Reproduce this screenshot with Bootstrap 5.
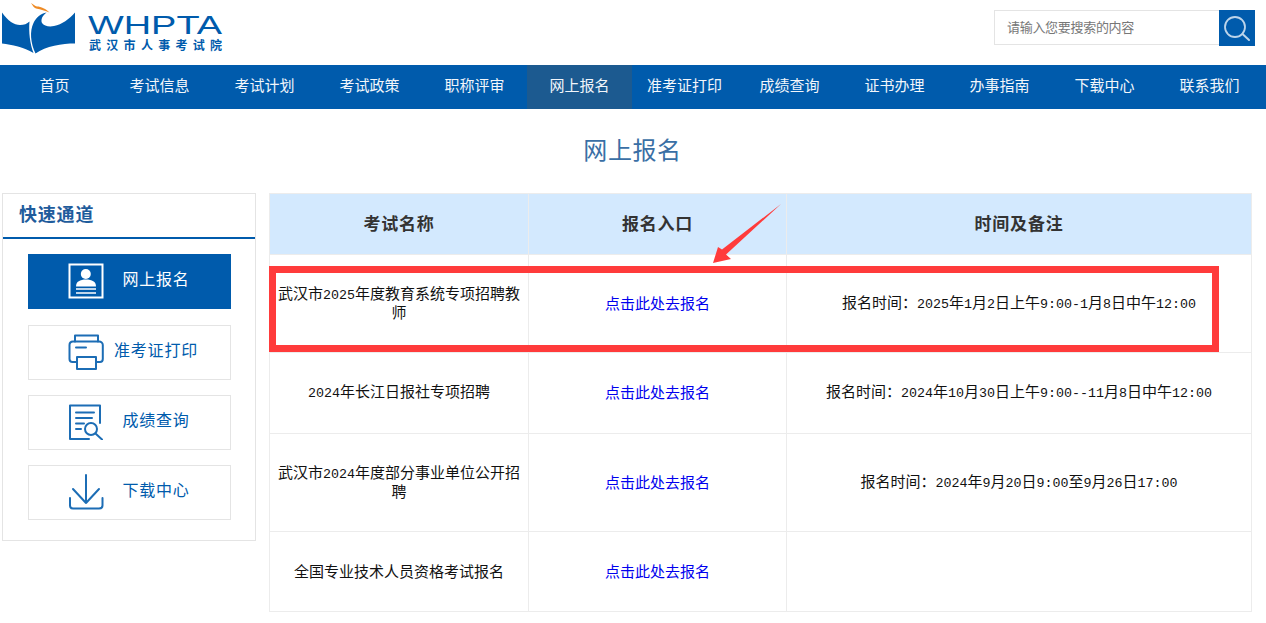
<!DOCTYPE html>
<html lang="zh-CN">
<head>
<meta charset="utf-8">
<title>网上报名</title>
<link href="https://cdn.jsdelivr.net/npm/bootstrap@5.3.0/dist/css/bootstrap.min.css" rel="stylesheet">
<style>
:root{--wh-blue:#005bac;--wh-line:#e4e4e4;}
html,body{height:623px;overflow:hidden;}
body{font-family:"Noto Sans CJK SC","Liberation Sans",sans-serif;font-size:15px;color:#111;background:#fff;}
.site-wrap{width:1260px;margin-left:2px;}
.site-head{height:65px;}
.logo-svg{width:224px;height:56px;display:block;}
.logo-cn{font-size:12px;font-weight:700;fill:#005bac;letter-spacing:5.300px;}
.logo-en{font-family:"Liberation Sans",sans-serif;font-size:25px;fill:#005bac;}
.search-box{margin-top:10px;margin-right:7px;height:36px;}
.search-input{width:225px;height:35px;border:1px solid var(--wh-line);border-right:0;border-radius:0;padding:0 12px 3px;font-size:13px;letter-spacing:-.3px;background:#fff;outline:0;}
.search-input::placeholder{color:#777;opacity:1;}
.search-btn{width:36px;height:36px;background:var(--wh-blue);border:0;padding:0;display:block;}
.main-nav{height:44px;background:var(--wh-blue);}
.main-nav-in{width:1260px;margin-left:2px;}
.nav-entry{width:105px;height:44px;line-height:40px;text-align:center;color:#f2f6fb;font-size:15px;text-decoration:none;display:block;}
.nav-entry.is-on{background:#1c5a90;}
.page-title{font-size:24px;line-height:34px;color:#3a6fa5;text-align:center;margin:23px 0 27px;font-weight:400;letter-spacing:.6px;padding-left:1px;}
.side-panel{width:254px;height:348px;border:1px solid var(--wh-line);flex:none;}
.side-title{height:45px;border-bottom:2px solid var(--wh-blue);padding-left:16px;font-size:18px;line-height:39px;font-weight:700;color:#1f5c9c;letter-spacing:.8px;margin:0;}
.side-list{padding:15px 24px 0 25px;gap:15px;}
.side-btn{height:55px;border:1px solid var(--wh-line);color:var(--wh-blue);font-size:16px;text-decoration:none;padding:0 0 2px 39px;}
.side-btn.is-on{background:var(--wh-blue);border-color:var(--wh-blue);color:#fff;margin-bottom:1px;}
.side-icon{width:36px;height:36px;flex:none;display:block;}
.side-label{width:102px;flex:none;text-align:center;white-space:nowrap;letter-spacing:.8px;margin:0 0 6px 1px;}
.ico-s{fill:none;stroke:#1c6db5;stroke-width:2;stroke-linecap:round;stroke-linejoin:round;}
.content-col{margin-left:13px;width:983px;position:relative;}
.table.exam-table{width:982px;table-layout:fixed;margin:0;--bs-table-bg:transparent;--bs-table-color:#111;}
.table.exam-table>:not(caption)>*>*{border:1px solid #ececec;text-align:center;vertical-align:middle;padding:0 7px 3px;line-height:17px;font-weight:400;box-shadow:none;}
.table.exam-table>thead>tr>th{background:#d3e9fe;font-size:17px;font-weight:700;color:#333;letter-spacing:.8px;height:61px;padding-bottom:4px;}
.exam-table a{color:#0000ee;text-decoration:none;}
.w-a{width:259px}.w-b{width:258px}.w-c{width:465px}
.r-a{height:98px}.r-b{height:81px}.r-c{height:80px}
.digit{font-family:"Liberation Mono",monospace;font-size:13.33px;line-height:1;}
.red-box{position:absolute;left:0;top:73px;width:950px;height:86px;border:7px solid #ff3b3b;pointer-events:none;}
.red-arrow{position:absolute;left:441px;top:7px;width:75px;height:66px;display:block;}
</style>
</head>
<body>
<div class="site-wrap">
  <header class="site-head d-flex justify-content-between">
    <a class="d-block text-decoration-none" href="#">
      <svg class="logo-svg" viewBox="2 0 224 56" aria-label="WHPTA 武汉市人事考试院" role="img">
        <path fill="#ee8b26" d="M31 3C33 6 34 8 36 8.500C41 9.500 45 10.500 49.500 12.500C46 9 41 6.500 37 6.500C35 6 33 4 31 3Z"/>
        <path fill="#005bac" d="M2 12.500C8 21 14 25 20 25C24 25 27 24 29.500 21.500C28.500 32 30 44 33.500 53C24 47 12 45 2 43.500Z"/>
        <path fill="#005bac" d="M35.500 53.500C30.500 43 29.500 31 33.500 23C36 17.500 41 13.500 46.500 12.500C42.500 15.500 40.500 19.500 42 23C44 26 49 27 54 26C62 24.500 69 19 75 12.500L75 43.500C62 43.500 46 46 35.500 53.500Z"/>
        <text class="logo-en" x="88" y="33.500" textLength="134" lengthAdjust="spacingAndGlyphs">WHPTA</text>
        <text class="logo-cn" x="89" y="50">武汉市人事考试院</text>
      </svg>
    </a>
    <form class="search-box d-flex align-items-start" onsubmit="return false">
      <input class="search-input" type="text" placeholder="请输入您要搜索的内容">
      <button class="search-btn" type="button" aria-label="搜索">
        <svg width="36" height="36" viewBox="0 0 36 36" class="d-block"><circle cx="16" cy="17" r="10" fill="none" stroke="#bcd4ea" stroke-width="1.800"/><path d="M23.500 24L30 30" stroke="#bcd4ea" stroke-width="2" stroke-linecap="round"/></svg>
      </button>
    </form>
  </header>
</div>
<nav class="main-nav">
  <div class="main-nav-in d-flex">
    <a class="nav-entry" href="#">首页</a>
    <a class="nav-entry" href="#">考试信息</a>
    <a class="nav-entry" href="#">考试计划</a>
    <a class="nav-entry" href="#">考试政策</a>
    <a class="nav-entry" href="#">职称评审</a>
    <a class="nav-entry is-on" href="#">网上报名</a>
    <a class="nav-entry" href="#">准考证打印</a>
    <a class="nav-entry" href="#">成绩查询</a>
    <a class="nav-entry" href="#">证书办理</a>
    <a class="nav-entry" href="#">办事指南</a>
    <a class="nav-entry" href="#">下载中心</a>
    <a class="nav-entry" href="#">联系我们</a>
  </div>
</nav>
<div class="site-wrap">
  <h1 class="page-title">网上报名</h1>
  <main class="d-flex align-items-start">
    <aside class="side-panel">
      <h2 class="side-title">快速通道</h2>
      <div class="side-list d-flex flex-column">
        <a class="side-btn is-on d-flex align-items-center" href="#">
          <svg class="side-icon" viewBox="0 0 36 36">
            <rect x="1.500" y="1.500" width="33" height="33" fill="none" stroke="#fff" stroke-width="2"/>
            <circle cx="17.800" cy="11" r="5" fill="#fff"/>
            <path fill="#fff" d="M8 23.500C8 18.500 12 16.500 18 16.500C24 16.500 28 18.500 28 23.500Z"/>
            <path d="M8 26H28M8 30H28" stroke="#fff" stroke-width="1.500"/>
          </svg>
          <span class="side-label">网上报名</span>
        </a>
        <a class="side-btn d-flex align-items-center" href="#">
          <svg class="side-icon" viewBox="0 0 36 36">
            <path class="ico-s" d="M8 28H4.500C2.500 28 1.500 27 1.500 25V11C1.500 9 3 7.500 5 7.500H31C33 7.500 34.800 9 34.800 11V25C34.800 27 33.500 28 32 28H29"/>
            <path class="ico-s" d="M7 7.500V1.500H30V7.500M9 23H28V35H9ZM8 13.500H18"/>
          </svg>
          <span class="side-label">准考证打印</span>
        </a>
        <a class="side-btn d-flex align-items-center" href="#">
          <svg class="side-icon" viewBox="0 0 36 36">
            <path class="ico-s" d="M21 35H2V1.500H32V19"/>
            <path class="ico-s" d="M8 8.500H26M8 14H24M8 19.500H16M8 25H13"/>
            <circle class="ico-s" cx="23" cy="25" r="6"/>
            <path class="ico-s" d="M27.500 29.500L34 35.500"/>
          </svg>
          <span class="side-label">成绩查询</span>
        </a>
        <a class="side-btn d-flex align-items-center" href="#">
          <svg class="side-icon" viewBox="0 0 36 36">
            <path class="ico-s" d="M18 1V29M5 15L18 29L31 15"/>
            <path class="ico-s" d="M2 24V31.500C2 33.500 3 34.500 5 34.500H31C33 34.500 34.500 33.500 34.500 31.500V24"/>
          </svg>
          <span class="side-label">下载中心</span>
        </a>
      </div>
    </aside>
    <section class="content-col">
      <table class="table exam-table">
        <colgroup><col class="w-a"><col class="w-b"><col class="w-c"></colgroup>
        <thead>
          <tr><th>考试名称</th><th>报名入口</th><th>时间及备注</th></tr>
        </thead>
        <tbody>
          <tr class="r-a">
            <td>武汉市<span class="digit">2025</span>年度教育系统专项招聘教师</td>
            <td><a href="#">点击此处去报名</a></td>
            <td>报名时间：<span class="digit">2025</span>年<span class="digit">1</span>月<span class="digit">2</span>日上午<span class="digit">9:00-1</span>月<span class="digit">8</span>日中午<span class="digit">12:00</span></td>
          </tr>
          <tr class="r-b">
            <td><span class="digit">2024</span>年长江日报社专项招聘</td>
            <td><a href="#">点击此处去报名</a></td>
            <td>报名时间：<span class="digit">2024</span>年<span class="digit">10</span>月<span class="digit">30</span>日上午<span class="digit">9:00--11</span>月<span class="digit">8</span>日中午<span class="digit">12:00</span></td>
          </tr>
          <tr class="r-a">
            <td>武汉市<span class="digit">2024</span>年度部分事业单位公开招聘</td>
            <td><a href="#">点击此处去报名</a></td>
            <td>报名时间：<span class="digit">2024</span>年<span class="digit">9</span>月<span class="digit">20</span>日<span class="digit">9:00</span>至<span class="digit">9</span>月<span class="digit">26</span>日<span class="digit">17:00</span></td>
          </tr>
          <tr class="r-c">
            <td>全国专业技术人员资格考试报名</td>
            <td><a href="#">点击此处去报名</a></td>
            <td></td>
          </tr>
        </tbody>
      </table>
      <div class="red-box"></div>
      <svg class="red-arrow" viewBox="710 200 75 66" aria-hidden="true">
        <polygon fill="#ff3b3b" points="713,263 731,259 726,254.500 781,204 722,249.500 718,247"/>
      </svg>
    </section>
  </main>
</div>
<script src="https://cdn.jsdelivr.net/npm/bootstrap@5.3.0/dist/js/bootstrap.bundle.min.js"></script>
</body>
</html>
